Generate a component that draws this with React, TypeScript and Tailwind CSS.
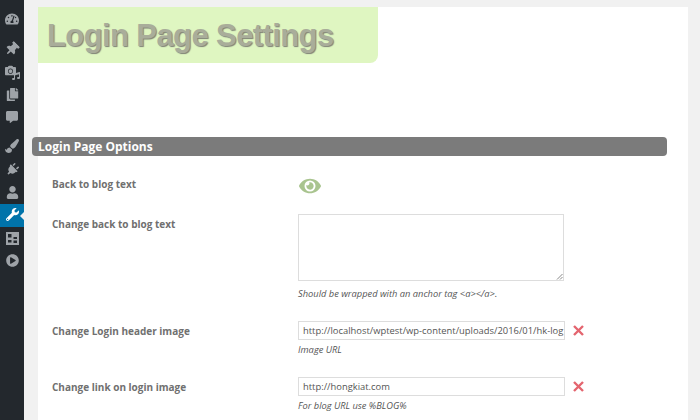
import { FaTachometerAlt, FaThumbtack, FaCopy, FaCommentAlt, FaPaintBrush, FaPlug, FaUser, FaWrench, FaPlayCircle, FaEye, FaCamera, FaMusic } from "react-icons/fa";

const c = "text-[#9ea3a8]";

function Media() {
  return (
    <span className="relative block w-[15px] h-[15px]">
      <FaCamera className={`absolute left-0 top-0 text-[11px] ${c}`} />
      <FaMusic className={`absolute right-0 bottom-0 text-[8px] ${c}`} />
    </span>
  );
}

function Widgets() {
  return (
    <svg width="13" height="13" viewBox="0 0 13 13">
      <rect width="13" height="13" fill="#9ea3a8" />
      <rect x="2" y="2" width="3.5" height="3.5" fill="#23282d" />
      <rect x="7.5" y="5" width="3.5" height="2" fill="#23282d" />
      <rect x="2" y="8" width="3.5" height="2.5" fill="#23282d" />
      <rect x="7.5" y="8.5" width="3.5" height="2.5" fill="#23282d" />
    </svg>
  );
}

function SideIcon({ children, cls, active }: { children: React.ReactNode; cls: string; active?: boolean }) {
  return (
    <div className={`relative flex items-center justify-center ${cls} ${active ? "bg-[#0073aa]" : ""}`}>
      {children}
      {active && <span className="absolute right-0 top-1/2 -translate-y-1/2 w-0 h-0 border-y-[4px] border-y-transparent border-r-[4px] border-r-[#f1f1f1]" />}
    </div>
  );
}

function Row({ label, top, labelCls, children }: { label: string; top: string; labelCls?: string; children: React.ReactNode }) {
  return (
    <div className={`flex ${top}`}>
      <div className={`w-[246px] shrink-0 text-[10px] leading-[16px] font-bold text-[#707070] ${labelCls ?? ""}`}>{label}</div>
      <div className="flex-1">{children}</div>
    </div>
  );
}

function Cross() {
  return (
    <svg className="ml-[8px]" width="11" height="11" viewBox="0 0 11 11">
      <path d="M1 1 10 10M10 1 1 10" stroke="#e4656f" strokeWidth="2.4" />
    </svg>
  );
}

function UrlField({ value, hint }: { value: string; hint: string }) {
  return (
    <div>
      <div className="flex items-center">
        <div className="w-[267px] h-[19px] border border-[#ddd] bg-white pl-[4px] text-[9.4px] leading-[17px] text-[#555] overflow-hidden whitespace-nowrap">{value}</div>
        <Cross />
      </div>
      <p className="mt-[3px] text-[9.3px] leading-[14px] italic text-[#555]">{hint}</p>
    </div>
  );
}

export default function App() {
  return (
    <div className="flex w-[700px] h-[420px] overflow-hidden bg-[#f1f1f1] font-['Open_Sans',sans-serif]">
      <aside className="w-6 shrink-0 bg-[#23282d] flex flex-col pt-[8px]">
        <SideIcon cls="h-[22px]"><FaTachometerAlt className={`text-[14px] ${c}`} /></SideIcon>
        <SideIcon cls="h-[22px] mt-[8px]"><FaThumbtack className={`text-[14px] rotate-45 ${c}`} /></SideIcon>
        <SideIcon cls="h-[22px] mt-[1px]"><Media /></SideIcon>
        <SideIcon cls="h-[22px]"><FaCopy className={`text-[13px] ${c}`} /></SideIcon>
        <SideIcon cls="h-[22px] mt-[1px]"><FaCommentAlt className={`text-[12px] ${c}`} /></SideIcon>
        <SideIcon cls="h-[22px] mt-[7px]"><FaPaintBrush className={`text-[14px] ${c}`} /></SideIcon>
        <SideIcon cls="h-[22px] mt-[1px]"><FaPlug className={`text-[13px] rotate-45 ${c}`} /></SideIcon>
        <SideIcon cls="h-[22px] mt-[1px]"><FaUser className={`text-[13px] ${c}`} /></SideIcon>
        <SideIcon cls="h-[23px] mt-[1px]" active><FaWrench className="text-[13px] text-white -translate-y-[1px]" /></SideIcon>
        <SideIcon cls="h-[22px]"><Widgets /></SideIcon>
        <SideIcon cls="h-[22px]"><FaPlayCircle className={`text-[13px] ${c}`} /></SideIcon>
      </aside>
      <main className="ml-[14px] mt-[7px] w-[650px] bg-white">
        <div className="w-[340px] h-[56px] bg-[#dff6c1] rounded-br-[8px] pl-[9px] pt-[9px]">
          <h1 className="font-['Liberation_Sans',sans-serif] font-bold text-[31px] leading-[40px] tracking-[-0.6px] text-[#a9ad9a] [text-shadow:1px_1px_1px_#7f8276]">Login Page Settings</h1>
        </div>
        <div className="-ml-[6px] mt-[74px] w-[635px] h-[19px] bg-[#7b7b7b] rounded-[4px] pl-[6px] text-[12px] leading-[19px] font-bold text-white">Login Page Options</div>
        <div className="pl-[14px]">
          <Row label="Back to blog text" top="mt-[20px] h-[16px]">
            <FaEye className="-mt-[1px] ml-[1px] text-[22px] text-[#a9c48f]" />
          </Row>
          <Row label="Change back to blog text" top="mt-[24px]">
            <div>
              <div className="relative w-[266px] h-[67px] -mt-[2px] border border-[#ddd] bg-white">
                <svg className="absolute right-0 bottom-0" width="7" height="7" viewBox="0 0 7 7"><path d="M1 6.5 6.5 1M4 6.5 6.5 4" stroke="#888" strokeWidth="1" /></svg>
              </div>
              <p className="mt-[6px] text-[9.3px] leading-[14px] italic text-[#555]">{"Should be wrapped with an anchor tag <a></a>."}</p>
            </div>
          </Row>
          <Row label="Change Login header image" top="mt-[20px]" labelCls="pt-[2px]">
            <UrlField value="http://localhost/wptest/wp-content/uploads/2016/01/hk-log" hint="Image URL" />
          </Row>
          <Row label="Change link on login image" top="mt-[20px]" labelCls="pt-[2px]">
            <UrlField value="http://hongkiat.com" hint="For blog URL use %BLOG%" />
          </Row>
        </div>
      </main>
    </div>
  );
}
